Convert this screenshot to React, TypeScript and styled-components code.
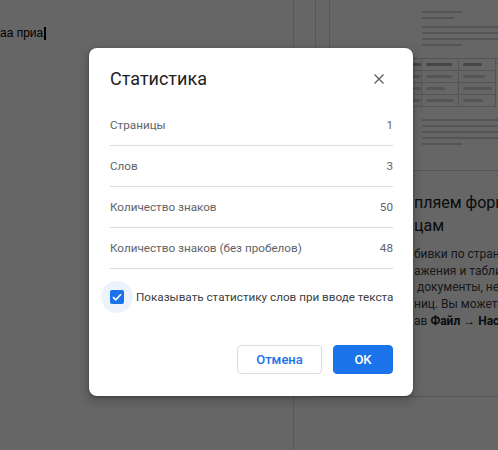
import React from 'react';
import styled, { createGlobalStyle } from 'styled-components';

const GlobalStyle = createGlobalStyle`
	html,
	body {
		margin: 0;
		padding: 0;
		width: 498px;
		height: 450px;
		overflow: hidden;
		background: #ffffff;
	}
	* {
		box-sizing: border-box;
	}
`;

const Screen = styled.div`
	position: relative;
	display: flex;
	width: 498px;
	height: 450px;
	overflow: hidden;
	background: #ffffff;
	font-family: Roboto, 'Liberation Sans', sans-serif;
`;

/* ---------- document underneath ---------- */

const DocArea = styled.div`
	flex: none;
	width: 294px;
	height: 100%;
	border-right: 1px solid #dadce0;
	padding-top: 25px;
`;

const DocLine = styled.div`
	display: flex;
	align-items: center;
	height: 16px;
	font-family: 'Liberation Sans', Arial, sans-serif;
	font-size: 12px;
	color: #000000;
	white-space: nowrap;
`;

const Caret = styled.span`
	display: inline-block;
	width: 1.5px;
	height: 13px;
	margin-left: 1px;
	background: #000000;
`;

const Gutter = styled.div`
	flex: none;
	width: 21px;
`;

const Sidebar = styled.div`
	flex: 1;
	display: flex;
	height: 397px;
	border-left: 1px solid #dadce0;
	border-bottom: 1px solid #dadce0;
	overflow: hidden;
`;

const Strip = styled.div`
	flex: none;
	width: 14px;
	border-right: 1px solid #dadce0;
`;

const Panel = styled.div`
	flex: 1;
	display: flex;
	flex-direction: column;
	min-width: 0;
	overflow: hidden;
	padding-top: 11px;
`;

const Inset = styled.div`
	display: flex;
	flex-direction: column;
	padding-left: 92px;
`;

const Bar = styled.div<{ $w?: number; $mt: number }>`
	height: 2px;
	width: ${(p) => (p.$w ? `${p.$w}px` : '100%')};
	margin-top: ${(p) => p.$mt}px;
	background: #d3d5d9;
`;

const Table = styled.div`
	display: grid;
	grid-template-columns: repeat(3, 37px);
	margin-top: 12px;
	margin-left: -37px;
	border-top: 1px solid #d3d5d9;
`;

const Cell = styled.div`
	display: flex;
	align-items: center;
	height: 12px;
	padding-left: 4px;
	border-right: 1px solid #d3d5d9;
	border-bottom: 1px solid #d3d5d9;
`;

const Dash = styled.div<{ $w: number; $head?: boolean }>`
	width: ${(p) => p.$w}px;
	height: 3px;
	border-radius: 2px;
	background: ${(p) => (p.$head ? '#a9adb3' : '#d3d5d9')};
`;

const Divider = styled.div`
	margin-top: 25px;
	height: 1px;
	background: #d3d5d9;
`;

const Article = styled.div`
	display: flex;
	flex-direction: column;
	padding-left: 84px;
	white-space: nowrap;
`;

const Heading = styled.div`
	margin-top: 20px;
	font-family: Roboto, 'Open Sans', sans-serif;
	font-size: 16px;
	line-height: 23px;
	color: #202124;
`;

const Body = styled.div`
	margin-top: 9px;
	font-size: 12px;
	line-height: 16.7px;
	color: #3c4043;

	b {
		font-weight: 700;
		color: #202124;
	}
`;

/* ---------- modal ---------- */

const Overlay = styled.div`
	position: absolute;
	inset: 0;
	background: rgba(0, 0, 0, 0.6);
`;

const Dialog = styled.div`
	position: absolute;
	left: 89px;
	top: 48px;
	width: 324px;
	display: flex;
	flex-direction: column;
	padding: 19px 20px 22px 21px;
	background: #ffffff;
	border-radius: 8px;
	box-shadow: 0 4px 8px 3px rgba(0, 0, 0, 0.15), 0 1px 3px rgba(0, 0, 0, 0.3);
`;

const TitleRow = styled.div`
	display: flex;
	align-items: center;
	justify-content: space-between;
	height: 24px;
`;

const Title = styled.h2`
	margin: 0;
	font-family: Roboto, 'Open Sans', sans-serif;
	font-size: 18px;
	font-weight: 400;
	line-height: 24px;
	color: #202124;
`;

const CloseButton = styled.button`
	display: flex;
	align-items: center;
	justify-content: center;
	width: 20px;
	height: 20px;
	margin-right: 4px;
	padding: 0;
	border: none;
	background: none;
	color: #5f6368;
	cursor: pointer;
`;

const StatList = styled.div`
	display: flex;
	flex-direction: column;
	margin-top: 14px;
`;

const StatRow = styled.div`
	display: flex;
	align-items: center;
	justify-content: space-between;
	height: 41px;
	border-bottom: 1px solid #dadce0;
	font-size: 11.7px;
	color: #5f6368;
`;

const CheckRow = styled.label`
	display: flex;
	align-items: center;
	height: 32px;
	margin-top: 12px;
	font-size: 11.7px;
	color: #3c4043;
	cursor: pointer;
`;

const Ripple = styled.span`
	display: flex;
	align-items: center;
	justify-content: center;
	flex: none;
	width: 32px;
	height: 32px;
	margin-left: -9px;
	border-radius: 50%;
	background: #edf3fd;
`;

const Box = styled.span`
	display: flex;
	align-items: center;
	justify-content: center;
	width: 14px;
	height: 14px;
	border-radius: 2px;
	background: #1a73e8;
`;

const CheckLabel = styled.span`
	margin-left: 3px;
	white-space: nowrap;
`;

const Actions = styled.div`
	display: flex;
	justify-content: flex-end;
	gap: 11px;
	margin-top: 32px;
`;

const Button = styled.button<{ $primary?: boolean }>`
	height: 29px;
	width: ${(p) => (p.$primary ? '60px' : '85px')};
	padding: 0;
	border-radius: 4px;
	border: 1px solid ${(p) => (p.$primary ? '#1a73e8' : '#dadce0')};
	background: ${(p) => (p.$primary ? '#1a73e8' : '#ffffff')};
	color: ${(p) => (p.$primary ? '#ffffff' : '#1a73e8')};
	font-family: Roboto, sans-serif;
	font-size: 13px;
	font-weight: 500;
	cursor: pointer;
`;

const stats = [
	{ label: 'Страницы', value: '1' },
	{ label: 'Слов', value: '3' },
	{ label: 'Количество знаков', value: '50' },
	{ label: 'Количество знаков (без пробелов)', value: '48' },
];

const tableRows = [
	[40, 26, 19],
	[40, 26, 22],
	[40, 19, 29],
	[40, 28, 20],
];

export default function App(): JSX.Element {
	return (
		<>
			<GlobalStyle />
			<Screen>
				<DocArea>
					<DocLine>
						аа приа
						<Caret />
					</DocLine>
				</DocArea>
				<Gutter />
				<Sidebar>
					<Strip />
					<Panel>
						<Inset>
							<Bar $w={40} $mt={0} />
							<Bar $w={32} $mt={4} />
							<Bar $mt={7} />
							<Bar $mt={4} />
							<Bar $mt={4} />
							<Bar $w={40} $mt={4} />
							<Table>
								{tableRows.map((row, r) =>
									row.map((w, c) => (
										<Cell key={`${r}-${c}`}>
											<Dash $w={w} $head={r === 0} />
										</Cell>
									))
								)}
							</Table>
							<Bar $mt={12} />
							<Bar $mt={4} />
							<Bar $mt={4} />
							<Bar $mt={4} />
							<Bar $w={40} $mt={4} />
						</Inset>
						<Divider />
						<Article>
							<Heading>
								пляем форм
								<br />
								цам
							</Heading>
							<Body>
								бивки по стран
								<br />
								ажения и табли
								<br />
								&nbsp;документы, не
								<br />
								ниц. Вы можете
								<br />
								ав <b>Файл → Нас</b>
							</Body>
						</Article>
					</Panel>
				</Sidebar>

				<Overlay />
				<Dialog role="dialog">
					<TitleRow>
						<Title>Статистика</Title>
						<CloseButton aria-label="Закрыть">
							<svg width="10" height="10" viewBox="0 0 10 10">
								<path d="M0.5 0.5 L9.5 9.5 M9.5 0.5 L0.5 9.5" stroke="currentColor" strokeWidth="1.4" />
							</svg>
						</CloseButton>
					</TitleRow>
					<StatList>
						{stats.map((s) => (
							<StatRow key={s.label}>
								<span>{s.label}</span>
								<span>{s.value}</span>
							</StatRow>
						))}
					</StatList>
					<CheckRow>
						<Ripple>
							<Box>
								<svg width="10" height="8" viewBox="0 0 10 8">
									<path d="M1 4.2 L3.7 6.8 L9 1.3" fill="none" stroke="#ffffff" strokeWidth="1.6" />
								</svg>
							</Box>
						</Ripple>
						<CheckLabel>Показывать статистику слов при вводе текста</CheckLabel>
					</CheckRow>
					<Actions>
						<Button>Отмена</Button>
						<Button $primary>OK</Button>
					</Actions>
				</Dialog>
			</Screen>
		</>
	);
}
